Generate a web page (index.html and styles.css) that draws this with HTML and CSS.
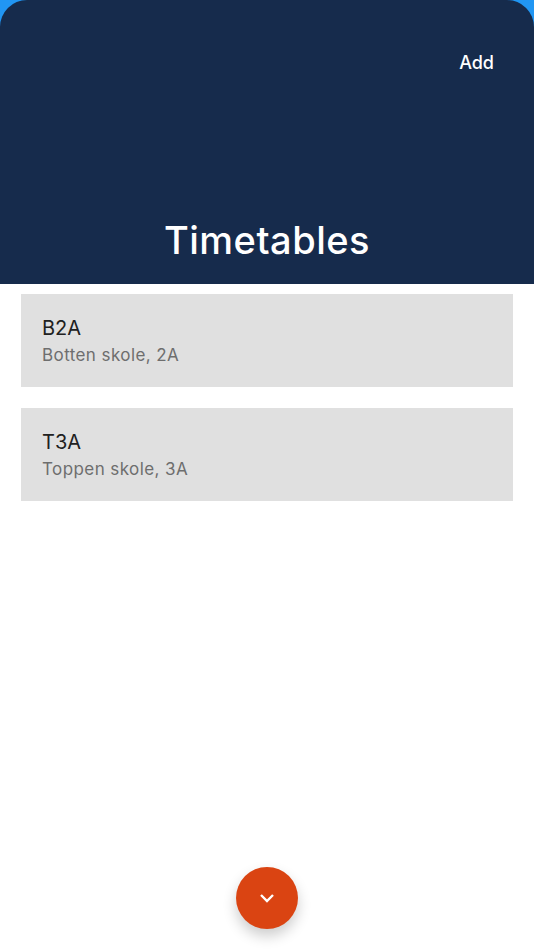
FILE: index.html
```html
<!DOCTYPE html>
<html lang="en">
<head>
<meta charset="utf-8">
<title>Timetables</title>
<link rel="stylesheet" href="styles.css">
</head>
<body>
<div class="screen">
  <div class="top">
    <header class="header">
      <div class="actions"><button class="add">Add</button></div>
      <h1 class="title">Timetables</h1>
    </header>
  </div>
  <main class="list">
    <article class="card">
      <div class="name">B2A</div>
      <div class="sub">Botten skole, 2A</div>
    </article>
    <article class="card">
      <div class="name">T3A</div>
      <div class="sub">Toppen skole, 3A</div>
    </article>
  </main>
  <div class="fab-row">
    <button class="fab" aria-label="Collapse">
      <svg class="chev" width="16" height="10" viewBox="0 0 16 10"><path d="M2 2l6 6 6-6" fill="none" stroke="#fff" stroke-width="2.400"/></svg>
    </button>
  </div>
</div>
</body>
</html>
```
FILE: styles.css
```css
* { box-sizing: border-box; }
html, body { margin: 0; height: 100%; background: #fff; }
body { font-family: Inter, "Noto Sans", sans-serif; overflow: hidden; }
.screen { height: 950px; display: flex; flex-direction: column; }
.top { background: #2196f3; height: 284px; flex: none; }
.header {
  height: 284px;
  background: #162b4c;
  border-radius: 27px 27px 0 0;
  display: flex;
  flex-direction: column;
  justify-content: space-between;
  padding: 52px 0 21px;
}
.actions { display: flex; justify-content: flex-end; padding-right: 40px; }
.add {
  background: none; border: 0; padding: 0; color: #fff;
  font: 500 18px/21px Inter, sans-serif;
}
.title {
  margin: 0; text-align: center; color: #fff;
  font-size: 38px; line-height: 46px; font-weight: 500; letter-spacing: 0.5px;
}
.list { padding: 10px 21px 0; display: flex; flex-direction: column; gap: 21px; }
.card { height: 93px; background: #e0e0e0; padding: 22px 21px 0; }
.name { font-size: 20px; line-height: 25px; color: #212121; }
.sub { font-size: 17px; line-height: 21px; margin-top: 4px; color: #6e6e6e; letter-spacing: 0.42px; }
.fab-row { margin-top: auto; padding-bottom: 21px; display: flex; justify-content: center; }
.fab {
  width: 62px; height: 62px; border-radius: 50%; border: 0; padding: 0;
  background: #da4412;
  box-shadow: 0 7px 14px rgba(0,0,0,.2);
  display: flex; align-items: center; justify-content: center;
}
```
